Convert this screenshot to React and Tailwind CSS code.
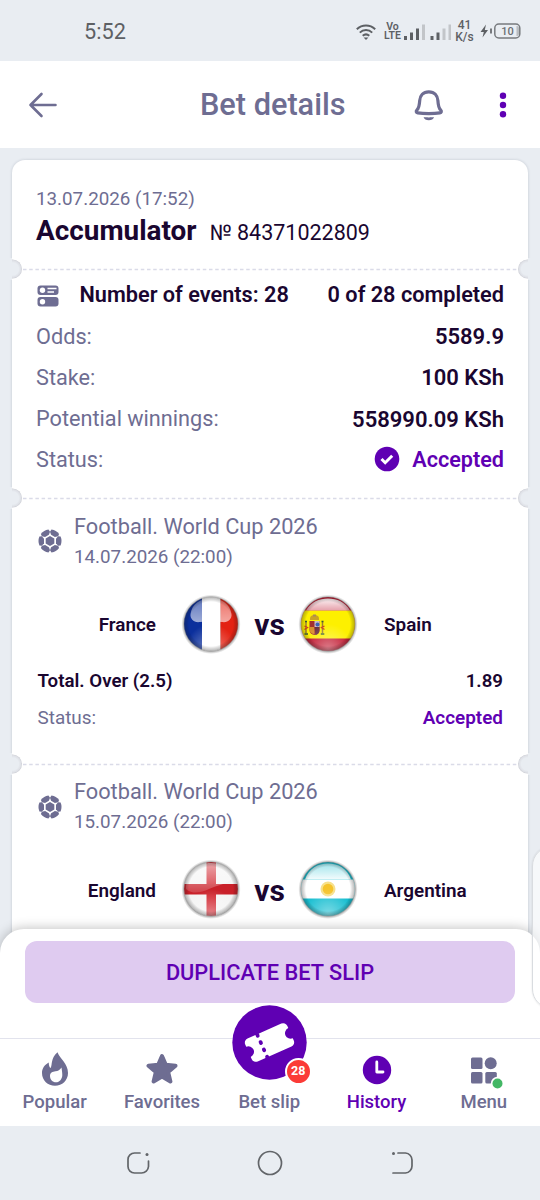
const summary = [
  { label: "Odds:", value: "5589.9" },
  { label: "Stake:", value: "100 KSh" },
  { label: "Potential winnings:", value: "558990.09 KSh" },
]

const events = [
  {
    league: "Football. World Cup 2026",
    date: "14.07.2026 (22:00)",
    home: "France",
    away: "Spain",
    market: "Total. Over (2.5)",
    odds: "1.89",
    status: "Accepted",
  },
  {
    league: "Football. World Cup 2026",
    date: "15.07.2026 (22:00)",
    home: "England",
    away: "Argentina",
  },
]

function FlagStripes({ country }) {
  if (country === "France") {
    return (
      <>
        <rect width="19" height="56" fill="#0b2f9c" />
        <rect x="19" width="18.5" height="56" fill="#fff" />
        <rect x="37.5" width="19" height="56" fill="#e32213" />
      </>
    )
  }
  if (country === "Spain") {
    return (
      <>
        <rect width="56" height="56" fill="#c0142c" />
        <rect y="14.5" width="56" height="28" fill="#fdf000" />
        <path d="M10 22.500a4.500 3.500 0 0 1 9 0v1.500h-9z" fill="#c9a227" />
        <path d="M13 18.500h3v2h-3z" fill="#a98a5a" />
        <path d="M9.500 25h10v9a5 5 0 0 1-10 0z" fill="#a3312f" />
        <path d="M14.500 25h5v6h-5z" fill="#c9b9c9" />
        <path d="M9.500 31h5v7a5 5 0 0 1-5-4z" fill="#d9902f" />
        <path d="M14.500 31h5v4a5 5 0 0 1-4 4z" fill="#6b2f3f" />
        <circle cx="17.500" cy="28.500" r="2" fill="#3f62b5" />
        <path d="M6 26v11M22.500 26v11" stroke="#9b7d33" strokeWidth="1.500" />
        <path d="M4.500 30l3 1.500-3 2M24.500 30l-3 1.500 3 2" stroke="#cf3b1c" strokeWidth="1.300" fill="none" />
        <path d="M4.500 38h3.500M20.800 38h3.500M5 25.500h2M21.500 25.500h2" stroke="#3b5a35" strokeWidth="1.500" />
      </>
    )
  }
  if (country === "England") {
    return (
      <>
        <rect width="56" height="56" fill="#f4f4f4" />
        <rect x="23.500" width="9.500" height="56" fill="#d0202a" />
        <rect y="23" width="56" height="10.500" fill="#c92029" />
      </>
    )
  }
  return (
    <>
      <rect width="56" height="56" fill="#14bdd0" />
      <rect y="18.500" width="56" height="19" fill="#fff" />
      <circle cx="28" cy="28" r="7.500" fill="#f7e08b" />
      <circle cx="28" cy="28" r="5.300" fill="#f5c32c" />
    </>
  )
}

// start and end opacity of the highlight in the upper half of each flag
const gloss = {
  France: [0.35, 0.6],
  Spain: [0.95, 0.6],
  England: [0.6, 0.15],
  Argentina: [0.6, 0.95],
}

function Flag({ country }) {
  const id = country.toLowerCase()
  const [top, bottom] = gloss[country]
  return (
    <svg viewBox="-2 -2 60 60" className="h-[60px] w-[60px] shrink-0">
      <defs>
        <clipPath id={`${id}-clip`}>
          <circle cx="28" cy="28" r="27" />
        </clipPath>
        <linearGradient id={`${id}-gloss`} x1="0" y1="0" x2="0" y2="1">
          <stop offset="0" stopColor="#fff" stopOpacity={top} />
          <stop offset="1" stopColor="#fff" stopOpacity={bottom} />
        </linearGradient>
        <radialGradient id={`${id}-shade`} cx="0.5" cy="0.5" r="0.5">
          <stop offset="0.82" stopColor="#000" stopOpacity="0" />
          <stop offset="1" stopColor="#222" stopOpacity="0.32" />
        </radialGradient>
        <radialGradient id={`${id}-glow`} cx="0.5" cy="0.95" r="0.45">
          <stop offset="0" stopColor="#fff" stopOpacity="0.45" />
          <stop offset="1" stopColor="#fff" stopOpacity="0" />
        </radialGradient>
        <radialGradient id={`${id}-shadow`}>
          <stop offset="0.88" stopColor="#555" stopOpacity="0.7" />
          <stop offset="1" stopColor="#888" stopOpacity="0" />
        </radialGradient>
      </defs>
      <circle cx="28" cy="28.300" r="29.700" fill={`url(#${id}-shadow)`} />
      <g clipPath={`url(#${id}-clip)`}>
        <FlagStripes country={country} />
        <rect width="56" height="56" fill={`url(#${id}-glow)`} />
        {country === "France" && (
          <path d="M7.500 18C9 8 17 2.500 28 2.500S47 8 48.500 18c.5 5-3.500 9-9.500 8-8-1.500-14-1.500-22 0-6 1-10-3-9.500-8z" fill={`url(#${id}-gloss)`} />
        )}
        {country === "England" && (
          <path d="M3 28C3 12 14 2 28 2c11 0 19 5 22 14-6 8-16 8-24 12-8 3.500-16 6-23 0z" fill={`url(#${id}-gloss)`} />
        )}
        {country === "Spain" && (
          <path d="M6 14.500C11 6 19 2.500 28 2.500S45 6 50 14.500z" fill={`url(#${id}-gloss)`} />
        )}
        {country === "Argentina" && (
          <path d="M5 18.500C9 7 18 2.500 28 2.500S47 7 51 18.500z" fill={`url(#${id}-gloss)`} />
        )}
        <circle cx="28" cy="28" r="27" fill={`url(#${id}-shade)`} />
      </g>
      <circle cx="28" cy="28" r="27" fill="none" stroke="#777" strokeOpacity="0.4" strokeWidth="0.800" />
    </svg>
  )
}

function StatusBar() {
  return (
    <div className="flex h-[61px] shrink-0 items-center bg-[#e9edf2] pt-[2px] text-[#5d6064]">
      <span className="ml-[84px] w-[272px] pt-[1px] text-[21.700px]">5:52</span>
      <svg viewBox="0 0 20 16" className="h-4 w-5" fill="none" stroke="#5d6064" strokeWidth="2">
        <path d="M.8 5.200a13.500 13.500 0 0 1 18.400 0M3.800 8.600a9 9 0 0 1 12.400 0M6.700 11.800a5 5 0 0 1 6.600 0" />
        <path d="M10 16l-2.400-2.600h4.800z" fill="#5d6064" stroke="none" />
      </svg>
      <div className="ml-[8px] flex w-[17px] flex-col items-center text-[10.500px] font-semibold leading-[10px]">
        <span>Vo</span>
        <span className="-mt-px">LTE</span>
      </div>
      <svg viewBox="0 0 48 16" className="ml-[3px] h-4 w-12" fill="#5d6064">
        <path d="M0 12h3v4H0zM6 8.500h3V16H6zM12 4.500h3V16h-3zM26.500 12h3v4h-3zM32.500 8.500h3V16h-3z" />
        <path d="M18 .5h3V16h-3zM38.500 4.500h3V16h-3zM44.500.5h2.500V16h-2.500z" fill="#c2c5c9" />
      </svg>
      <div className="ml-[3px] flex w-[19px] -translate-y-px flex-col items-center text-[12px] font-medium leading-[12px]">
        <span>41</span>
        <span>K/s</span>
      </div>
      <svg viewBox="0 0 42 16" className="ml-[6px] h-4 w-[42px] -translate-y-px">
        <path d="M6 1.500L.5 9h3.300L2.500 14.500 8 7H4.800z" fill="#5d6064" />
        <path d="M11 5.500v5" stroke="#777a7e" strokeWidth="2" />
        <rect x="14.800" y="1" width="25" height="14" rx="4" fill="none" stroke="#777a7e" strokeWidth="1.500" />
        <path d="M36.500 3h.5a2 2 0 0 1 2 2v6a2 2 0 0 1-2 2h-.5z" fill="#b9bcc0" />
        <text x="27.500" y="12" textAnchor="middle" fontSize="11" fontWeight="500" fill="#6b6e72">10</text>
      </svg>
    </div>
  )
}

function Header() {
  return (
    <header className="relative z-10 flex h-[87px] shrink-0 items-center bg-white text-[#6e6d92]">
      <svg viewBox="0 0 30 26" className="ml-7 h-[26px] w-[30px]" fill="none" stroke="currentColor" strokeWidth="2.600" strokeLinecap="round" strokeLinejoin="round">
        <path d="M27.500 13H2.500M13.500 2L2.500 13l11 11" />
      </svg>
      <h1 className="ml-[142px] w-[214px] whitespace-nowrap pt-[2px] text-[30.700px] font-medium">Bet details</h1>
      <svg viewBox="0 0 30 32" className="h-8 w-[30px]" fill="none" stroke="currentColor" strokeWidth="3.200" strokeLinejoin="round">
        <path d="M14.800 2.800c-5.700 0-8.800 3.600-9.100 8.800-.3 4.900-.6 7.400-2.700 9.300-1.300 1.300-.9 2.700.8 3 3.300.6 7.200.8 11 .8s7.700-.2 11-.8c1.700-.3 2.100-1.700.8-3-2.100-1.900-2.400-4.400-2.700-9.300-.3-5.200-3.400-8.800-9.100-8.800z" />
        <path d="M9.600 28c2.400.5 8 .5 10.400 0-.5 2.300-2.600 3.300-5.200 3.300s-4.700-1-5.200-3.300z" fill="currentColor" stroke="none" />
      </svg>
      <svg viewBox="0 0 8 26" className="ml-[54.500px] h-[26px] w-2" fill="#5f00b3">
        <circle cx="4" cy="3.800" r="3.200" />
        <circle cx="4" cy="13" r="3.200" />
        <circle cx="4" cy="22.200" r="3.200" />
      </svg>
    </header>
  )
}

// perforated line with a half-round notch at each edge of the card
function Divider() {
  return (
    <div className="relative h-0">
      <svg viewBox="0 0 524 22" className="absolute -left-1 -top-[11px] h-[22px] w-[524px]">
        <defs>
          <radialGradient id="notch">
            <stop offset="0.65" stopColor="#e9edf2" />
            <stop offset="0.9" stopColor="#dddfe5" />
            <stop offset="1" stopColor="#c9cbd2" />
          </radialGradient>
        </defs>
        <path d="M15 11.500H509" stroke="#dadbe8" strokeWidth="1.500" strokeDasharray="3.500 2.700" />
        <circle cx="4.500" cy="11" r="9.500" fill="url(#notch)" />
        <circle cx="519.500" cy="11" r="9.500" fill="url(#notch)" />
        <path d="M0 0h4v22H0zM520 0h4v22h-4z" fill="#e9edf2" />
      </svg>
    </div>
  )
}

function BallIcon() {
  return (
    <svg viewBox="-12 -12 24 24" className="h-6 w-6 shrink-0" fill="#6e6d92">
      <path d="M0-5L4.300-2.500V2.500L0 5L-4.300 2.500V-2.500z" />
      {[0, 60, 120, 180, 240, 300].map((angle) => (
        <path key={angle} transform={`rotate(${angle})`} d="M6-2.200L8.100-4.700L10.600-4.400A11.500 11.500 0 0 1 10.600 4.400L8.100 4.700L6 2.200z" />
      ))}
    </svg>
  )
}

function EventCard({ event }) {
  return (
    <section className="h-[265.500px] pl-[25.500px] pr-[25px] pt-[12px]">
      <div className="flex h-[62px] items-center">
        <BallIcon />
        <div className="ml-[12.500px] text-[#6e6d92]">
          <p className="text-[21.750px] leading-[31px]">{event.league}</p>
          <p className="text-[18.800px] leading-[30px]">{event.date}</p>
        </div>
      </div>
      <div className="mt-[21.500px] flex h-[60px] items-center text-[18.900px] font-semibold text-[#1a0630]">
        <span className="mt-[4px] w-[118.500px] text-right">{event.home}</span>
        <span className="ml-[25px]"><Flag country={event.home} /></span>
        <span className="mt-[3px] w-[57px] text-center text-[30px] font-bold leading-none">vs</span>
        <Flag country={event.away} />
        <span className="ml-[26px] mt-[4px]">{event.away}</span>
      </div>
      {event.market && (
        <div className="mt-[8.500px] text-[18.700px]">
          <div className="flex h-[38px] items-center justify-between font-semibold text-[#1a0630]">
            <span>{event.market}</span>
            <span>{event.odds}</span>
          </div>
          <div className="flex h-[37px] items-center justify-between text-[18.900px]">
            <span className="text-[#6e6d92]">Status:</span>
            <span className="font-semibold text-[#5f00b3]">{event.status}</span>
          </div>
        </div>
      )}
    </section>
  )
}

function BetCard() {
  return (
    <article className="mx-3 mt-3 rounded-t-[13px] bg-white shadow-[0_0_3px_rgba(40,50,80,0.2)]">
      <section className="h-[109px] px-[24px] pt-[23.500px]">
        <p className="text-[18.800px] leading-[30px] text-[#6e6d92]">13.07.2026 (17:52)</p>
        <div className="flex items-baseline text-[#1a0630]">
          <h2 className="text-[27.900px] font-bold leading-[33px]">Accumulator</h2>
          <span className="ml-[13px] text-[21.500px] leading-[24px]">№ 84371022809</span>
        </div>
      </section>
      <Divider />
      <section className="h-[229px] px-6 pt-[6px] text-[21.700px] text-[#6e6d92]">
        <div className="flex h-[41.200px] items-center font-semibold text-[#1a0630]">
          <svg viewBox="0 0 22 22" className="ml-[1px] h-[22px] w-[22px]">
            <rect x=".5" y=".5" width="21" height="9.500" rx="3" fill="#6e6d92" />
            <rect x=".5" y="12" width="21" height="9.500" rx="3" fill="#6e6d92" />
            <circle cx="5.500" cy="5.200" r="2.700" fill="#fff" />
            <circle cx="5.500" cy="16.700" r="2.700" fill="#fff" />
            <path d="M10.500 3.500h9M10.500 7h6.500" stroke="#fff" strokeWidth="1.500" />
          </svg>
          <span className="ml-[20.500px]">Number of events: 28</span>
          <span className="ml-auto">0 of 28 completed</span>
        </div>
        {summary.map((row) => (
          <div key={row.label} className="flex h-[41.200px] items-center justify-between">
            <span>{row.label}</span>
            <span className="text-[22px] font-semibold text-[#1a0630]">{row.value}</span>
          </div>
        ))}
        <div className="flex h-[41.200px] items-center">
          <span>Status:</span>
          <svg viewBox="0 0 26 26" className="ml-auto h-[26px] w-[26px] -translate-y-px">
            <circle cx="13" cy="13" r="12.300" fill="#5f00b3" />
            <path d="M7.500 13l3.700 3.700 7-7" fill="none" stroke="#fff" strokeWidth="3" />
          </svg>
          <span className="ml-[12px] text-[21.600px] font-semibold text-[#5f00b3]">Accepted</span>
        </div>
      </section>
      {events.map((event) => (
        <div key={event.home}>
          <Divider />
          <EventCard event={event} />
        </div>
      ))}
    </article>
  )
}

function NavItem({ label, active, children }) {
  return (
    <div className={`flex w-[107.300px] flex-col items-center ${active ? "text-[#5f00b3]" : "text-[#6e6d92]"}`}>
      <div className="relative flex h-[50px] items-end justify-center">{children}</div>
      <span className="whitespace-nowrap text-[18.500px] font-medium leading-[26px]">{label}</span>
    </div>
  )
}

function BottomNav() {
  return (
    <nav className="flex h-[88px] w-full border-t-[1.500px] border-[#e2e3ed] pl-[1px]">
      <NavItem label="Popular">
        <svg viewBox="0 0 26 34" className="mb-[3px] h-[34px] w-[26px]" fill="currentColor">
          <path d="M15.500.300C18 7 26 11.500 26 21c0 7.300-5.800 12.800-13 12.800S0 28.300 0 21c0-4.600 2.700-8.300 6.700-10.500.2 3.200.8 5 2 5.600C10.500 12.500 8.500 6.500 15.500.3z" />
          <path d="M19.500 15.500c.2 2 .8 4.300.8 7.500 0 4-2.800 7.300-6.300 7.300S8 27.500 8 24c0-3.300 2.500-4.300 5.500-4.700 2.500-.4 4.500-1.300 6-3.800z" fill="#fff" />
        </svg>
      </NavItem>
      <NavItem label="Favorites">
        <svg viewBox="0 0 32 32" className="mb-[4px] h-8 w-8" fill="currentColor" stroke="currentColor" strokeWidth="4" strokeLinejoin="round">
          <path d="M16 3l3.800 8.800 9.700.900-7.300 6.400 2.200 9.400-8.400-5-8.400 5 2.200-9.400-7.300-6.400 9.700-.9z" />
        </svg>
      </NavItem>
      <NavItem label="Bet slip">
        <div className="absolute -top-[34px] left-1/2 -ml-[37.500px]">
          <svg viewBox="0 0 75 75" className="h-[75px] w-[75px]">
            <circle cx="37.500" cy="37.500" r="37.200" fill="#5f00b3" />
            <g transform="rotate(-24 37.500 37.500)">
              <path d="M19 25h37a4.500 4.500 0 0 1 4.500 4.500v2.500a5.500 5.500 0 0 0 0 11v2.500A4.500 4.500 0 0 1 56 50H19a4.500 4.500 0 0 1-4.500-4.500V43a5.500 5.500 0 0 0 0-11v-2.500A4.500 4.500 0 0 1 19 25z" fill="#fff" />
              <path d="M29.500 25.500v25" stroke="#5f00b3" strokeWidth="3.800" strokeLinecap="round" strokeDasharray="1 7" />
            </g>
          </svg>
          <span className="absolute -right-[5px] bottom-[-5px] flex h-[27px] w-[27px] items-center justify-center rounded-full border-[2.500px] border-white bg-[#fb3b37] text-[12.500px] font-bold text-white">28</span>
        </div>
      </NavItem>
      <NavItem label="History" active>
        <svg viewBox="0 0 30 30" className="mb-[4px] h-[30px] w-[30px]">
          <circle cx="15" cy="15" r="14.200" fill="currentColor" />
          <path d="M14.800 7v10H21" fill="none" stroke="#fff" strokeWidth="2.800" strokeLinecap="round" strokeLinejoin="round" />
        </svg>
      </NavItem>
      <NavItem label="Menu">
        <svg viewBox="0 0 38 38" className="-mb-[2px] ml-[9px] h-[38px] w-[38px]" fill="currentColor">
          <rect x="2" y="4.500" width="11.500" height="11.500" rx="1.500" />
          <circle cx="21.700" cy="10.200" r="6" />
          <rect x="2" y="19" width="11.500" height="11.500" rx="1.500" />
          <rect x="16.300" y="19" width="11.500" height="11.500" rx="1.500" />
          <circle cx="28.500" cy="30.500" r="6.700" fill="#fff" />
          <circle cx="28.500" cy="30.500" r="5" fill="#43b765" />
        </svg>
      </NavItem>
    </nav>
  )
}

function SystemNav() {
  return (
    <div className="relative flex h-[74px] shrink-0 items-center bg-[#e9edf2]">
      <svg viewBox="0 0 24 24" className="ml-[126px] h-6 w-6" fill="none" stroke="#626569" strokeWidth="1.700" strokeLinecap="round">
        <path d="M14 2H8.500a6.500 6.500 0 0 0-6.500 6.500v7A6.500 6.500 0 0 0 8.500 22h7a7 7 0 0 0 7-6.500V10" />
        <path d="M21 3.500v.1" strokeWidth="3" />
      </svg>
      <svg viewBox="0 0 26 26" className="ml-[107px] h-[26px] w-[26px]" fill="none" stroke="#626569" strokeWidth="1.700">
        <circle cx="13" cy="13" r="11.500" />
      </svg>
      <svg viewBox="0 0 24 24" className="ml-[107px] h-6 w-6" fill="none" stroke="#626569" strokeWidth="1.700" strokeLinecap="round">
        <path d="M8 2h7.500a7 7 0 0 1 6.500 7v6a7 7 0 0 1-6.500 7H3" />
        <path d="M3.500 2.500v.1" strokeWidth="3" />
      </svg>
    </div>
  )
}

export default function App() {
  return (
    <div className="relative flex h-[1200px] w-[540px] flex-col overflow-hidden bg-[#e9edf2] font-[Roboto,sans-serif]">
      <StatusBar />
      <Header />
      <main className="h-[810px] shrink-0 overflow-hidden">
        <BetCard />
      </main>
      <footer className="relative -mt-[29px] h-[197px] shrink-0 rounded-t-[24px] bg-white shadow-[0_-1px_12px_rgba(0,0,0,0.24)]">
        <div className="h-[109px] px-[25px] pt-3">
          <button className="h-[62px] w-full rounded-xl bg-[#dfcbf0] pt-[2px] text-[21.800px] font-medium text-[#5f00b3]">DUPLICATE BET SLIP</button>
        </div>
        <BottomNav />
      </footer>
      <SystemNav />
      <div className="absolute -right-8 top-[846px] h-[163px] w-[40px] rounded-[20px] border border-[#d9dce0] bg-white/60 shadow-[0_0_2px_rgba(0,0,0,0.12)]" />
    </div>
  )
}
